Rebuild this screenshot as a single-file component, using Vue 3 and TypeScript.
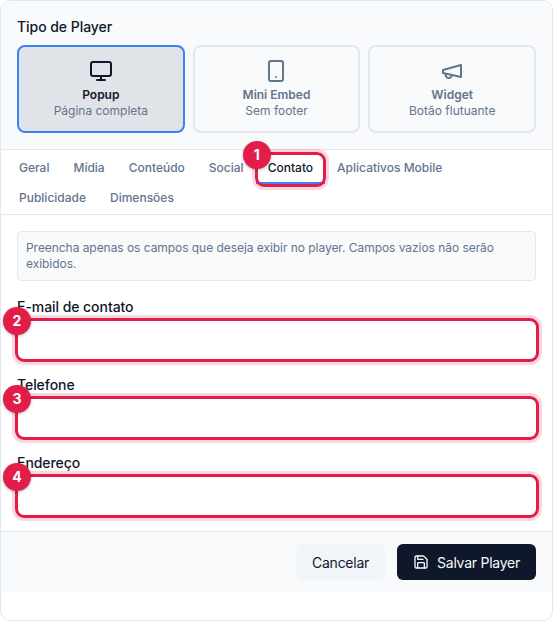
<script setup lang="ts">
const tabs = [
  { label: 'Geral' },
  { label: 'Mídia' },
  { label: 'Conteúdo' },
  { label: 'Social' },
  { label: 'Contato', active: true, step: 1 },
  { label: 'Aplicativos Mobile' },
  { label: 'Publicidade' },
  { label: 'Dimensões' },
]
const fields = [
  { label: 'E-mail de contato', step: 2 },
  { label: 'Telefone', step: 3 },
  { label: 'Endereço', step: 4 },
]
</script>

<template>
  <div class="dialog">
    <section class="type-section">
      <h2 class="type-title">Tipo de Player</h2>
      <div class="type-grid">
        <button class="type-card active" type="button">
          <svg class="type-icon" viewBox="0 0 24 24">
            <rect x="2" y="3" width="20" height="14" rx="2" />
            <line x1="8" y1="21" x2="16" y2="21" />
            <line x1="12" y1="17" x2="12" y2="21" />
          </svg>
          <span class="type-name">Popup</span>
          <span class="type-sub">Página completa</span>
        </button>
        <button class="type-card" type="button">
          <svg class="type-icon" viewBox="0 0 24 24">
            <rect x="5" y="2" width="14" height="20" rx="2" />
            <path d="M12 18h.01" />
          </svg>
          <span class="type-name">Mini Embed</span>
          <span class="type-sub">Sem footer</span>
        </button>
        <button class="type-card" type="button">
          <svg class="type-icon" viewBox="0 0 24 24">
            <path d="m3 11 18-5v12L3 14v-3z" />
            <path d="M11.6 16.8a3 3 0 1 1-5.8-1.6" />
          </svg>
          <span class="type-name">Widget</span>
          <span class="type-sub">Botão flutuante</span>
        </button>
      </div>
    </section>

    <nav class="tabs">
      <div
        v-for="tab in tabs"
        :key="tab.label"
        class="tab"
        :class="{ 'tab-active': tab.active, marked: tab.step }"
      >
        {{ tab.label }}
        <span v-if="tab.step" class="badge">{{ tab.step }}</span>
      </div>
    </nav>

    <section class="form">
      <p class="info">Preencha apenas os campos que deseja exibir no player. Campos vazios não serão exibidos.</p>
      <div v-for="field in fields" :key="field.label" class="field">
        <label class="field-label">{{ field.label }}</label>
        <div class="input-wrap marked">
          <input class="input" type="text" />
          <span class="badge">{{ field.step }}</span>
        </div>
      </div>
    </section>

    <footer class="footer">
      <button class="btn btn-ghost" type="button">Cancelar</button>
      <button class="btn btn-primary" type="button">
        <svg class="btn-icon" viewBox="0 0 24 24">
          <path d="M15.2 3a2 2 0 0 1 1.4.6l3.8 3.8a2 2 0 0 1 .6 1.4V19a2 2 0 0 1-2 2H5a2 2 0 0 1-2-2V5a2 2 0 0 1 2-2z" />
          <path d="M17 21v-7a1 1 0 0 0-1-1H8a1 1 0 0 0-1 1v7" />
          <path d="M7 3v4a1 1 0 0 0 1 1h7" />
        </svg>
        Salvar Player
      </button>
    </footer>
  </div>
</template>

<style scoped>
.dialog {
  box-sizing: border-box;
  width: 553px;
  height: 621px;
  border: 1px solid #e2e8f0;
  border-radius: 10px;
  background: #fff;
  color: #0f172a;
  font-family: Inter, "Liberation Sans", sans-serif;
}
.type-section {
  padding: 16px;
  background: #f8fafc;
  border-bottom: 1px solid #e2e8f0;
  border-radius: 9px 9px 0 0;
}
.type-title {
  margin: 0 0 8px;
  font-size: 14px;
  line-height: 20px;
  font-weight: 500;
  letter-spacing: -0.05px;
}
.type-grid {
  display: grid;
  grid-template-columns: repeat(3, 1fr);
  gap: 8px;
}
.type-card {
  display: flex;
  flex-direction: column;
  align-items: center;
  padding: 12px;
  border: 2px solid #e2e8f0;
  border-radius: 8px;
  background: #f8fafc;
  color: #64748b;
  font-family: inherit;
}
.type-card.active {
  border-color: #3b82f6;
  background: #e0e3e8;
  color: #0f172a;
}
.type-icon {
  width: 24px;
  height: 24px;
  margin-bottom: 4px;
  fill: none;
  stroke: currentColor;
  stroke-width: 2;
  stroke-linecap: round;
  stroke-linejoin: round;
}
.type-name {
  font-size: 12px;
  line-height: 16px;
  font-weight: 600;
}
.type-sub {
  font-size: 12px;
  line-height: 16px;
  color: #64748b;
}
.tabs {
  display: flex;
  flex-wrap: wrap;
  padding: 4px 24px 0 6px;
  border-bottom: 1px solid #e2e8f0;
}
.tab {
  position: relative;
  box-sizing: border-box;
  height: 30px;
  padding: 0 12px;
  font-size: 12px;
  font-weight: 500;
  line-height: 28px;
  color: #64748b;
}
.tab-active {
  color: #0f172a;
  border-bottom: 2px solid #3b82f6;
}
.marked::after {
  content: "";
  position: absolute;
  inset: -2px -3px -2px -2px;
  border: 3px solid #e11d48;
  border-radius: 9px;
  box-shadow: 0 0 0 3px rgba(225, 29, 72, 0.18);
  pointer-events: none;
}
.tab-active.marked::after {
  inset: -2px -1px -5px -1px;
}
.badge {
  position: absolute;
  z-index: 2;
  left: -14px;
  top: -13px;
  width: 28px;
  height: 28px;
  border-radius: 50%;
  background: #e11d48;
  box-shadow: 0 1px 3px rgba(15, 23, 42, 0.3);
  color: #fff;
  font-size: 14px;
  font-weight: 700;
  line-height: 28px;
  text-align: center;
}
.tab .badge {
  left: -13px;
}
.form {
  padding: 16px 16px 15px;
}
.info {
  margin: 0 0 16px;
  padding: 8px;
  border: 1px solid #e2e8f0;
  border-radius: 4px;
  background: #f8fafc;
  color: #64748b;
  font-size: 12px;
  line-height: 16px;
  letter-spacing: -0.05px;
}
.field + .field {
  margin-top: 15px;
}
.field-label {
  display: block;
  margin-bottom: 3px;
  font-size: 14px;
  line-height: 20px;
  font-weight: 500;
  letter-spacing: -0.06px;
}
.input-wrap {
  position: relative;
  height: 40px;
}
.input {
  box-sizing: border-box;
  display: block;
  width: 100%;
  height: 40px;
  border: 1px solid transparent;
  border-radius: 6px;
  background: #fff;
  outline: none;
}
.footer {
  display: flex;
  justify-content: flex-end;
  gap: 12px;
  padding: 12px 16px;
  border-top: 1px solid #e2e8f0;
  background: #f8fafc;
}
.btn {
  display: inline-flex;
  align-items: center;
  gap: 8px;
  height: 36px;
  padding: 0 16px;
  border: 0;
  border-radius: 6px;
  font-family: inherit;
  font-size: 14px;
  font-weight: 400;
  letter-spacing: -0.25px;
}
.btn-ghost {
  background: #f1f5f9;
  color: #0f172a;
}
.btn-primary {
  background: #0f172a;
  color: #f8fafc;
}
.btn-icon {
  width: 16px;
  height: 16px;
  fill: none;
  stroke: currentColor;
  stroke-width: 2;
  stroke-linecap: round;
  stroke-linejoin: round;
}
</style>
